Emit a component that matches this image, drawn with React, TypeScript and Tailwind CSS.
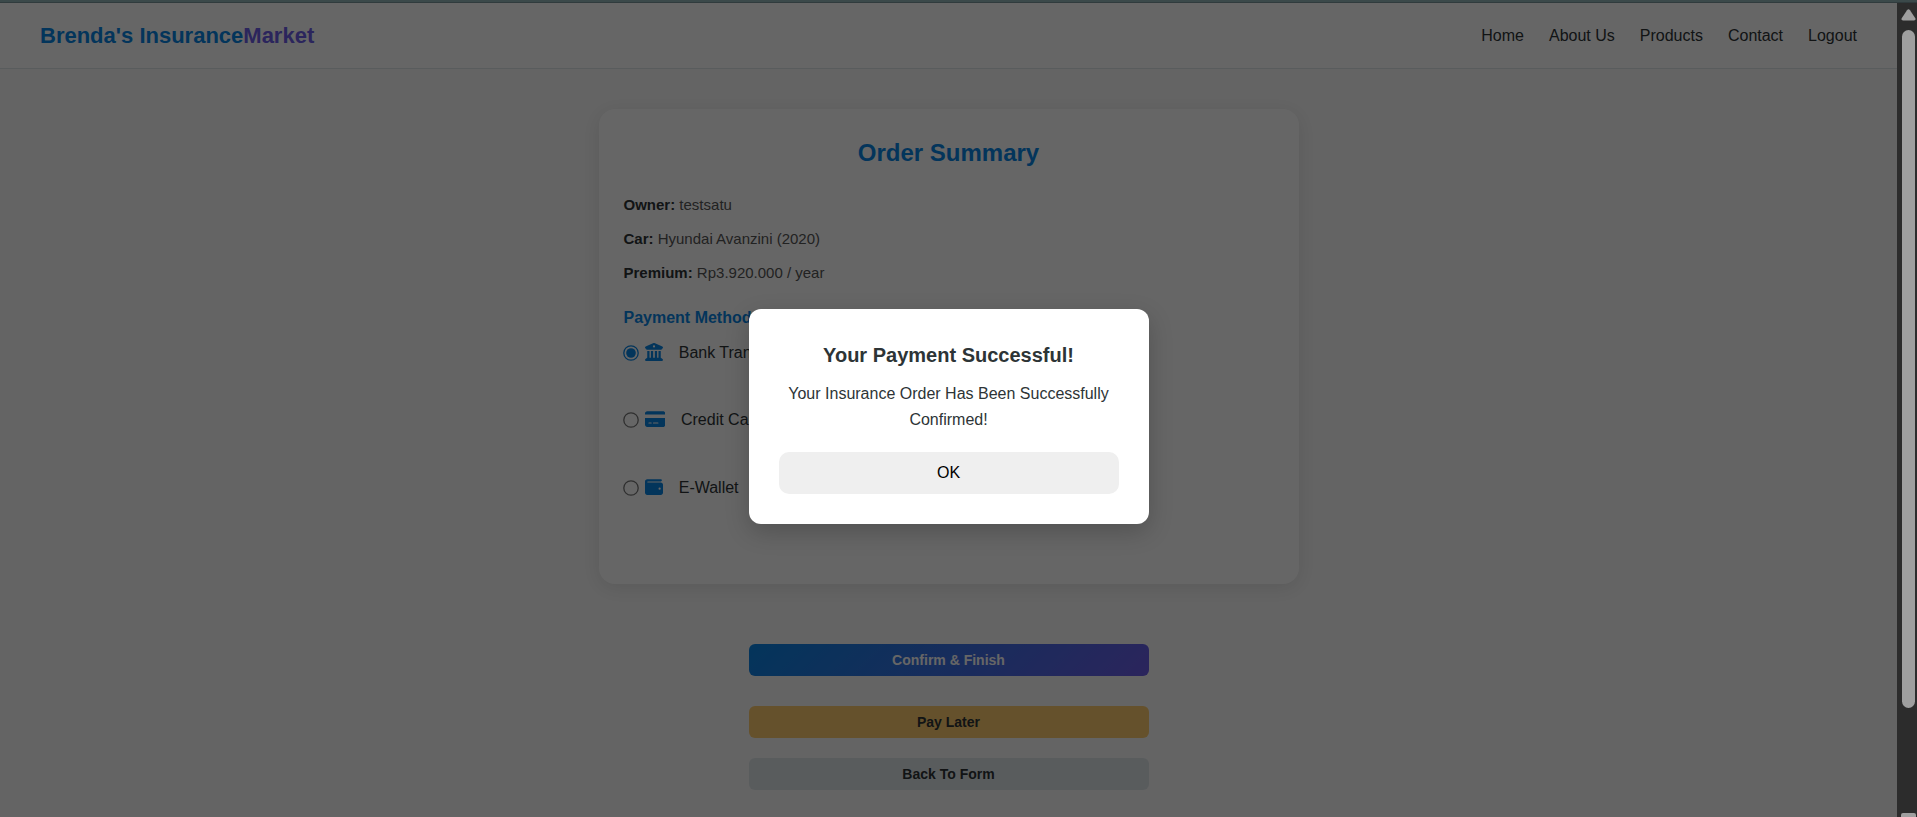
import { FaBuildingColumns, FaCreditCard, FaWallet } from "react-icons/fa6";

const navLinks = ["Home", "About Us", "Products", "Contact", "Logout"];

const details = [
  { label: "Owner:", value: "testsatu" },
  { label: "Car:", value: "Hyundai Avanzini (2020)" },
  { label: "Premium:", value: "Rp3.920.000 / year" },
];

function Radio({ checked }: { checked?: boolean }) {
  return (
    <svg viewBox="0 0 16 16" className="-ml-[0.8px] h-4 w-4 shrink-0">
      <circle cx="8" cy="8" r="7.2" fill="none" strokeWidth="1.3" stroke={checked ? "#0984e3" : "#767676"} />
      {checked && <circle cx="8" cy="8" r="4.8" fill="#0984e3" />}
    </svg>
  );
}

function Header() {
  return (
    <header className="flex h-[66px] items-center justify-between border-b border-[#dfe6e9] bg-white px-10">
      <div className="text-[22px] leading-[36px] font-bold text-[#0984e3]">
        Brenda's Insurance<span className="text-[#6c5ce7]">Market</span>
      </div>
      <nav className="flex gap-[25px]">
        {navLinks.map((link) => (
          <a key={link}>{link}</a>
        ))}
      </nav>
    </header>
  );
}

function OrderCard() {
  return (
    <section className="h-[475px] w-[700px] rounded-2xl bg-white px-[25px] pt-[25px] shadow-[0_4px_20px_rgba(0,0,0,0.1)]">
      <h2 className="mb-[21px] text-center text-2xl leading-[38px] font-bold text-[#0984e3]">Order Summary</h2>
      <div className="flex flex-col gap-[10px] text-[15px] leading-6 text-[#555555]">
        {details.map((d) => (
          <p key={d.label}>
            <strong className="text-[#2d3436]">{d.label}</strong> {d.value}
          </p>
        ))}
      </div>
      <h3 className="mt-[21px] mb-[10.6px] leading-6 font-bold text-[#0984e3]">Payment Method</h3>
      <div className="flex flex-col gap-[43.5px] leading-6">
        <label className="flex items-center">
          <Radio checked />
          <FaBuildingColumns className="mb-px ml-[6px] h-[18px] w-[18px] text-[#0984e3]" />
          <span className="ml-4">Bank Transfer</span>
        </label>
        <label className="flex items-center">
          <Radio />
          <FaCreditCard className="mb-[2px] ml-[6px] h-[18px] w-[20.25px] text-[#0984e3]" />
          <span className="ml-4">Credit Card</span>
        </label>
        <label className="flex items-center">
          <Radio />
          <FaWallet className="mb-[2px] ml-[6px] h-[18px] w-[18px] text-[#0984e3]" />
          <span className="ml-4">E-Wallet</span>
        </label>
      </div>
    </section>
  );
}

function Actions() {
  return (
    <div className="mt-[60px] flex w-[400px] flex-col text-[14px] font-bold">
      <button className="h-8 rounded-md bg-[linear-gradient(135deg,#0984e3,#6c5ce7)] text-white">Confirm &amp; Finish</button>
      <button className="mt-[30px] h-8 rounded-md bg-[#fdcb6e]">Pay Later</button>
      <button className="mt-5 h-8 rounded-md bg-[#dfe6e9]">Back To Form</button>
    </div>
  );
}

function Modal() {
  return (
    <div className="absolute inset-0 flex justify-center bg-black/60 pt-[306px]">
      <div className="h-[215px] w-[400px] rounded-xl bg-white p-[30px] text-center shadow-[0_8px_25px_rgba(0,0,0,0.2)]">
        <h3 className="mb-[10px] text-[20px] leading-[32px] font-bold">Your Payment Successful!</h3>
        <p className="mb-5 leading-[25.6px]">Your Insurance Order Has Been Successfully Confirmed!</p>
        <button className="block h-[42px] w-full rounded-[10px] bg-[#efefef] text-black">OK</button>
      </div>
    </div>
  );
}

function Scrollbar() {
  return (
    <div className="flex w-5 flex-col items-center overflow-hidden bg-[#2c2c2c] pt-[6px]">
      <svg viewBox="0 0 15 12" className="ml-[3px] h-3 w-[15px] shrink-0">
        <path d="M6 1.2Q7.5-.6 9 1.2L14.3 9.2Q15.2 11.5 13 11.5H2Q-.2 11.5 .7 9.2Z" fill="#9f9f9f" />
      </svg>
      <div className="mt-[9px] ml-[3px] h-[678px] w-[13px] shrink-0 rounded-full bg-[#9f9f9f]" />
      <div className="mt-[105px] ml-[3px] h-3 w-[15px] shrink-0 rounded-[2px] bg-[#9f9f9f]" />
    </div>
  );
}

export default function App() {
  return (
    <div className="flex h-[817px] w-[1917px] flex-col overflow-hidden font-['Liberation_Sans',Arial,sans-serif] text-base text-[#2d3436]">
      <div className="h-[3px] shrink-0 border-b border-[#303b3d] bg-[#3b494a]" />
      <div className="flex min-h-0 flex-1">
        <div className="relative flex-1 overflow-hidden bg-[#fafafa]">
          <Header />
          <main className="flex flex-col items-center pt-10">
            <OrderCard />
            <Actions />
          </main>
          <Modal />
        </div>
        <Scrollbar />
      </div>
    </div>
  );
}
